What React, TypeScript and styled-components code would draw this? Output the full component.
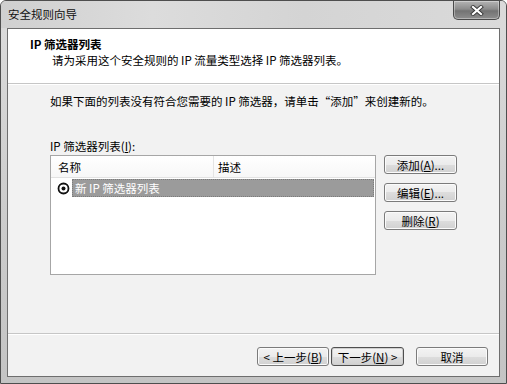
import React from 'react';
import styled, { createGlobalStyle, css } from 'styled-components';

const GlobalStyle = createGlobalStyle`
    html, body {
        margin: 0;
        padding: 0;
        background: #fff;
    }

    body {
        font-family: "Noto Sans CJK SC", "Noto Sans", sans-serif;
        font-size: 11.5px;
        color: #000;
    }
`;

const Window = styled.div`
    width: 507px;
    height: 384px;
    box-sizing: border-box;
    display: flex;
    flex-direction: column;
    border: 1px solid #4e4e4e;
    border-radius: 6px 6px 0 0;
    overflow: hidden;
    background: linear-gradient(to bottom, #d6d6d6 0, #dadada 28px, #cbcbcb 60%, #c4c4c4 100%);
`;

const TitleBar = styled.div`
    height: 27px;
    display: flex;
    justify-content: space-between;
    align-items: flex-start;
    flex-shrink: 0;
    background: linear-gradient(to right, #d0d0d0, #dcdcdc 30%, #d4d4d4 60%, #dadada);
`;

const Title = styled.span`
    padding: 6px 0 0 7px;
    line-height: 14px;
    color: #111;
`;

const CloseButton = styled.button`
    width: 47px;
    height: 19px;
    margin-right: 6px;
    padding: 0;
    display: flex;
    align-items: center;
    justify-content: center;
    border: 1px solid #4a4a4a;
    border-top: none;
    border-radius: 0 0 5px 5px;
    background: linear-gradient(to bottom, #b4b4b4 0%, #8c8c8c 45%, #737373 55%, #8e8e8e 100%);
    box-shadow: inset 0 0 0 1px rgba(255, 255, 255, 0.35);
`;

const Client = styled.div`
    flex: 1;
    margin: 0 6px 6px 6px;
    display: flex;
    flex-direction: column;
    border: 1px solid #6e6e6e;
    background: #f2f2f2;
`;

const Header = styled.div`
    height: 55px;
    box-sizing: border-box;
    padding: 7px 0 0 22px;
    background: #fff;
    border-bottom: 1px solid #c6c6c6;
    line-height: 16px;

    h1 {
        margin: 0;
        font-size: 11.5px;
        font-weight: bold;
    }

    p {
        margin: 0 0 0 22px;
    }
`;

const Body = styled.div`
    flex: 1;
    padding: 9px 0 0 42px;
    border-top: 1px solid #fff;
    line-height: 14px;
`;

const Intro = styled.div``;

const ListLabel = styled.div`
    margin-top: 31px;
`;

const ListRow = styled.div`
    margin-top: 2px;
    display: flex;
    gap: 8px;
`;

const ListBox = styled.div`
    width: 326px;
    height: 120px;
    box-sizing: border-box;
    border: 1px solid #a6a6a6;
    background: #fff;
`;

const ListHeader = styled.div`
    height: 22px;
    box-sizing: border-box;
    display: flex;
    border-bottom: 1px solid #e2e2e2;
    background: linear-gradient(to bottom, #fff, #f7f7f7);
`;

const HeaderCell = styled.div<{ $width?: number }>`
    display: flex;
    align-items: center;
    padding-left: ${p => (p.$width ? 7 : 4)}px;
    ${p => p.$width && css`
        width: ${p.$width}px;
        box-sizing: border-box;
        border-right: 1px solid #e4e4e4;
    `}
`;

const ItemRow = styled.div`
    margin: 1px 1px 0 6px;
    height: 18px;
    display: flex;
    align-items: center;
    gap: 2px;
`;

const ItemLabel = styled.div`
    flex: 1;
    height: 100%;
    box-sizing: border-box;
    display: flex;
    align-items: center;
    padding-left: 2px;
    background: #9b9b9b;
    color: #fff;
    border: 1px dotted #7c7c7c;
`;

const SideButtons = styled.div`
    width: 73px;
    display: flex;
    flex-direction: column;
    gap: 9px;
`;

const Button = styled.button<{ $width?: number; $default?: boolean }>`
    width: ${p => p.$width ?? 73}px;
    height: 19px;
    padding: 0;
    font: inherit;
    line-height: 14px;
    color: #000;
    border: 1px solid ${p => (p.$default ? '#4f4f4f' : '#7b7b7b')};
    border-radius: 3px;
    background: linear-gradient(to bottom, #f3f3f3 0%, #ebebeb 50%, #dddddd 50%, #d1d1d1 100%);
    box-shadow: inset 0 0 0 1px ${p => (p.$default ? '#cfcfcf' : '#fbfbfb')};
`;

const Footer = styled.div`
    height: 43px;
    box-sizing: border-box;
    display: flex;
    justify-content: flex-end;
    align-items: flex-start;
    padding: 13px 11px 0 0;
    border-top: 1px solid #c6c6c6;
    box-shadow: inset 0 1px 0 #fff;
`;

const NavGroup = styled.div`
    display: flex;
    gap: 2px;
    margin-right: 12px;
`;

const SelectedIcon = () => (
    <svg width="13" height="13" viewBox="0 0 13 13">
        <circle cx="6.5" cy="6.5" r="5" fill="#fff" stroke="#111" strokeWidth="1.8" />
        <circle cx="6.5" cy="6.5" r="2" fill="#111" />
    </svg>
);

const CloseGlyph = () => (
    <svg width="14" height="11" viewBox="0 0 14 11">
        <path d="M3 2 L11 9 M11 2 L3 9" stroke="#3a3a3a" strokeWidth="4" strokeLinecap="square" />
        <path d="M3 2 L11 9 M11 2 L3 9" stroke="#fff" strokeWidth="2.2" strokeLinecap="square" />
    </svg>
);

const App = () => (
    <>
        <GlobalStyle />
        <Window>
            <TitleBar>
                <Title>安全规则向导</Title>
                <CloseButton aria-label="关闭"><CloseGlyph /></CloseButton>
            </TitleBar>
            <Client>
                <Header>
                    <h1>IP 筛选器列表</h1>
                    <p>请为采用这个安全规则的 IP 流量类型选择 IP 筛选器列表。</p>
                </Header>
                <Body>
                    <Intro>如果下面的列表没有符合您需要的 IP 筛选器，请单击“添加”来创建新的。</Intro>
                    <ListLabel>IP 筛选器列表(<u>I</u>):</ListLabel>
                    <ListRow>
                        <ListBox>
                            <ListHeader>
                                <HeaderCell $width={163}>名称</HeaderCell>
                                <HeaderCell>描述</HeaderCell>
                            </ListHeader>
                            <ItemRow>
                                <SelectedIcon />
                                <ItemLabel>新 IP 筛选器列表</ItemLabel>
                            </ItemRow>
                        </ListBox>
                        <SideButtons>
                            <Button>添加(<u>A</u>)...</Button>
                            <Button>编辑(<u>E</u>)...</Button>
                            <Button>删除(<u>R</u>)</Button>
                        </SideButtons>
                    </ListRow>
                </Body>
                <Footer>
                    <NavGroup>
                        <Button $width={72}>&lt; 上一步(<u>B</u>)</Button>
                        <Button $width={73} $default>下一步(<u>N</u>) &gt;</Button>
                    </NavGroup>
                    <Button $width={72}>取消</Button>
                </Footer>
            </Client>
        </Window>
    </>
);

export default App;
